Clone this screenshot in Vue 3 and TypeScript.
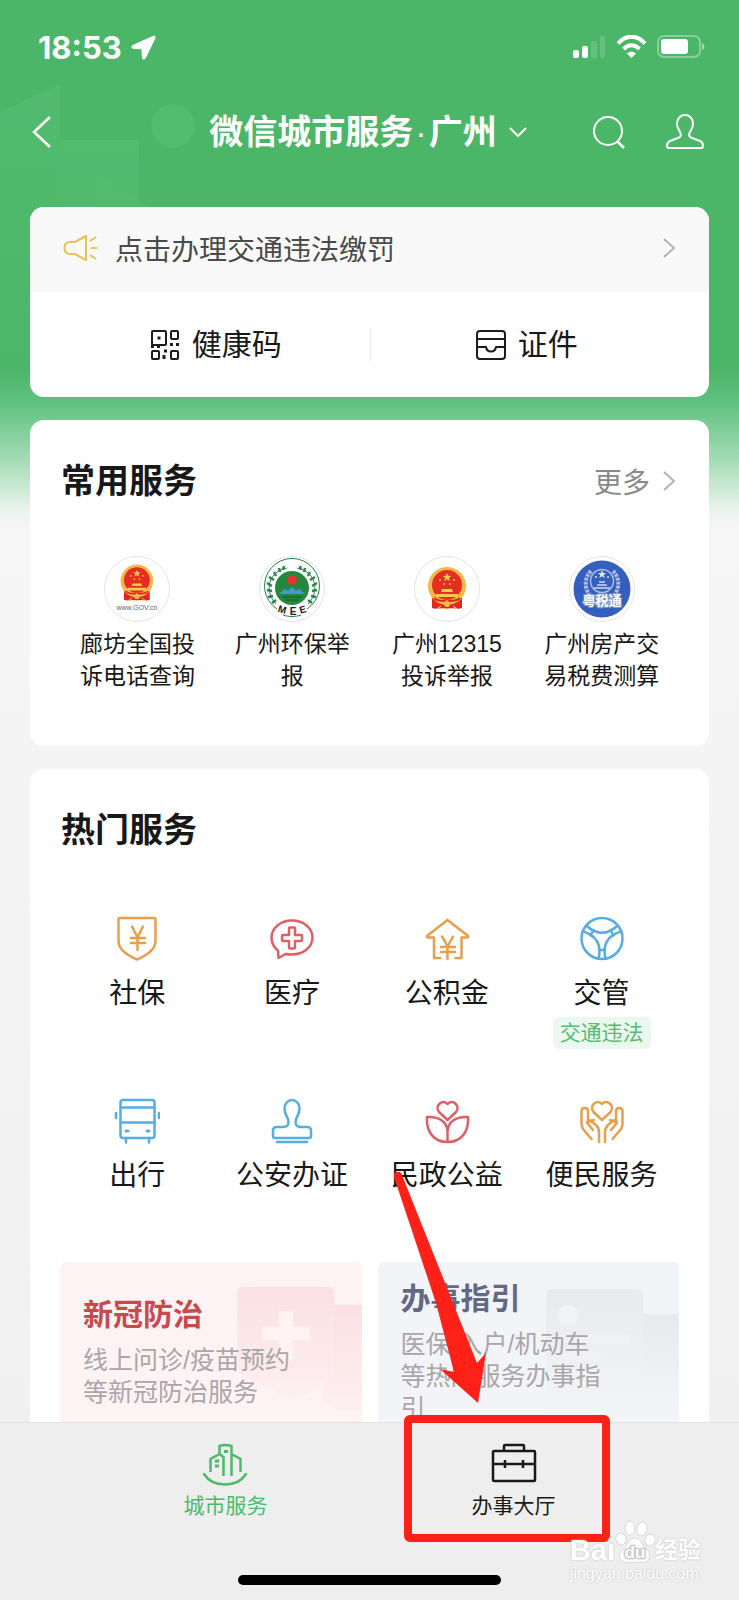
<script setup lang="ts">
interface FrequentService {
  id: string
  lines: string[]
}

interface HotService {
  icon: string
  label: string
  tone: 'orange' | 'red' | 'blue'
  tag?: string
}

interface Promo {
  id: 'health' | 'guide'
  title: string
  text: string
}

const frequent: FrequentService[] = [
  { id: 'gov', lines: ['廊坊全国投', '诉电话查询'] },
  { id: 'mee', lines: ['广州环保举', '报'] },
  { id: 'report', lines: ['广州12315', '投诉举报'] },
  { id: 'tax', lines: ['广州房产交', '易税费测算'] },
]

const hot: HotService[] = [
  { icon: 'shield', label: '社保', tone: 'orange' },
  { icon: 'medical', label: '医疗', tone: 'red' },
  { icon: 'house', label: '公积金', tone: 'orange' },
  { icon: 'wheel', label: '交管', tone: 'blue', tag: '交通违法' },
  { icon: 'bus', label: '出行', tone: 'blue' },
  { icon: 'stamp', label: '公安办证', tone: 'blue' },
  { icon: 'lotus', label: '民政公益', tone: 'red' },
  { icon: 'hands', label: '便民服务', tone: 'orange' },
]

const promos: Promo[] = [
  { id: 'health', title: '新冠防治', text: '线上问诊/疫苗预约等新冠防治服务' },
  { id: 'guide', title: '办事指引', text: '医保/入户/机动车等热门服务办事指引' },
]
</script>

<template>
  <div class="screen">
    <svg class="skyline" viewBox="0 0 739 400" preserveAspectRatio="xMidYMin slice" aria-hidden="true">
      <defs>
        <linearGradient id="tower" x1="0" y1="0" x2="0" y2="1">
          <stop offset="0" stop-color="#6bd08a" />
          <stop offset="1" stop-color="#6bd08a" stop-opacity="0" />
        </linearGradient>
      </defs>
      <circle cx="173" cy="126" r="22" fill="#6bd08a" />
      <path d="M0 112L60 84V400H0Z" fill="url(#tower)" />
      <path d="M60 140H139V400H60Z" fill="url(#tower)" />
      <path d="M97 172L180 230V400H97Z" fill="url(#tower)" />
    </svg>

    <div class="scroll">
      <div class="status">
        <div class="clock">
          <span>18:53</span>
          <svg width="25" height="25" viewBox="0 0 25 25" aria-hidden="true">
            <path d="M22.500 1.200L1.600 10.600c-1.300.7-1 2.600.5 2.700l8.800.5.6 9c.1 1.500 2 1.900 2.700.5L24 3C24.500 1.700 23.700.8 22.500 1.200Z" fill="#fff" stroke="#fff" stroke-linejoin="round" />
          </svg>
        </div>
        <div class="signals">
          <svg width="33" height="24" viewBox="0 0 33 24" fill="#fff" aria-hidden="true">
            <rect x="0" y="15" width="6" height="8" rx="2" />
            <rect x="9" y="11" width="6" height="12" rx="2" />
            <rect x="18" y="6" width="6" height="17" rx="2" opacity=".15" />
            <rect x="27" y="1" width="5" height="22" rx="2" opacity=".15" />
          </svg>
          <svg width="31" height="24" viewBox="0 0 31 24" fill="none" stroke="#fff" stroke-width="4" aria-hidden="true">
            <path d="M2 8.500C10-.5 21-.5 29 8.500" />
            <path d="M7.500 14C12.500 9 18.500 9 23.500 14" />
            <path d="M15.500 23l-4.500-4.500c2.500-2.500 6.500-2.500 9 0Z" fill="#fff" stroke="none" />
          </svg>
          <svg width="48" height="24" viewBox="0 0 48 24" aria-hidden="true">
            <rect x="1" y="1" width="42" height="21" rx="6" fill="none" stroke="#fff" stroke-width="2" opacity=".35" />
            <rect x="4" y="4" width="27" height="15" rx="3" fill="#fff" />
            <path d="M45 8c3 1 3 6 0 7Z" fill="#fff" opacity=".5" />
          </svg>
        </div>
      </div>

      <header class="nav">
        <button class="plain" type="button" aria-label="返回">
          <svg width="20" height="32" viewBox="0 0 20 32" fill="none" stroke="#fff" stroke-width="2.500" aria-hidden="true">
            <path d="M18 1L2 16l16 15" />
          </svg>
        </button>
        <button class="plain city" type="button">
          <h1>微信城市服务<span class="dot">·</span>广州</h1>
          <svg width="18" height="12" viewBox="0 0 18 12" fill="none" stroke="#fff" stroke-width="2" aria-hidden="true">
            <path d="M1 2l8 8 8-8" />
          </svg>
        </button>
        <div class="tools">
          <button class="plain" type="button" aria-label="搜索">
            <svg width="32" height="34" viewBox="0 0 32 34" fill="none" stroke="#fff" stroke-width="2" aria-hidden="true">
              <circle cx="15" cy="16" r="14" />
              <path d="M24 26l7 7" stroke-width="2.500" />
            </svg>
          </button>
          <button class="plain" type="button" aria-label="我的">
            <svg width="38" height="36" viewBox="0 0 38 36" fill="none" stroke="#fff" stroke-width="2" stroke-linejoin="round" aria-hidden="true">
              <path d="M19 1c5 0 8 4 8 9 0 4-2 6-3.500 9-1 3 0 4 2.500 5l8 3c2.500 1 3 2.500 3 5 0 1-.5 2-2 2H3c-1.500 0-2-1-2-2 0-2.500.5-4 3-5l8-3c2.500-1 3.500-2 2.500-5C13 16 11 14 11 10c0-5 3-9 8-9Z" />
            </svg>
          </button>
        </div>
      </header>

      <main>
        <section class="card top">
          <a class="notice" href="#fine">
            <svg width="35" height="28" viewBox="0 0 35 28" fill="none" stroke="#ebc055" stroke-width="2" stroke-linejoin="round" aria-hidden="true">
              <path d="M23 2v24L12 20H7c-3 0-5.500-2-5.500-6S4 8 7 8h5Z" />
              <path d="M27 7l6-4M28 14h6M27 21l6 4" />
            </svg>
            <span>点击办理交通违法缴罚</span>
            <svg class="arrow" width="14" height="20" viewBox="0 0 14 20" fill="none" stroke="#b2b2b2" stroke-width="2" aria-hidden="true">
              <path d="M2 1l10 9-10 9" />
            </svg>
          </a>
          <div class="quick">
            <a href="#code">
              <svg width="30" height="30" viewBox="0 0 30 30" fill="none" stroke="#1b1b1b" stroke-width="2" aria-hidden="true">
                <rect x="2" y="1" width="14" height="14" rx="1" />
                <rect x="21" y="1" width="7" height="8" rx="1" />
                <rect x="2" y="21" width="7" height="8" rx="1" />
                <rect x="21" y="21" width="7" height="8" rx="1" />
                <path d="M7.500 8h3M20 14.500h3M26 14.500h3M1 16.500h3M7 16.500h3M14 21h3M14 25v4" stroke-width="3" />
              </svg>
              <span>健康码</span>
            </a>
            <a href="#papers">
              <svg width="30" height="30" viewBox="0 0 30 30" fill="none" stroke="#1b1b1b" stroke-width="2" stroke-linejoin="round" aria-hidden="true">
                <rect x="1" y="1" width="28" height="28" rx="3" />
                <path d="M1 9h28M1 17h9c1 6 9 6 10 0h9" />
              </svg>
              <span>证件</span>
            </a>
          </div>
        </section>

        <section class="card usual">
          <div class="head">
            <h2>常用服务</h2>
            <a class="more" href="#more">
              更多
              <svg width="14" height="20" viewBox="0 0 14 20" fill="none" stroke="#b2b2b2" stroke-width="2" aria-hidden="true">
                <path d="M2 1l10 9-10 9" />
              </svg>
            </a>
          </div>
          <div class="columns">
            <a v-for="item in frequent" :key="item.id" class="service" :href="`#${item.id}`">
              <svg class="logo" width="66" height="66" viewBox="0 0 66 66" aria-hidden="true">
                <circle cx="33" cy="33" r="32.500" fill="#fff" stroke="#e4e4e4" />
                <g v-if="item.id === 'gov' || item.id === 'report'" :transform="item.id === 'gov' ? 'translate(4.5 0) scale(.86)' : 'translate(0 1)'">
                  <path d="M18 36h30v15c-5 2-9-1-15 1-6-2-10 1-15-1Z" fill="#dc2a20" />
                  <circle cx="33" cy="29" r="19" fill="#f2b84b" />
                  <circle cx="33" cy="28" r="15" fill="#e52d22" />
                  <path d="M33 16l1.200 2.800 3 .2-2.300 2 .8 2.900-2.700-1.600-2.600 1.600.7-2.900-2.300-2 3-.2Z" fill="#f8ca51" />
                  <g fill="#f8ca51">
                    <circle cx="26" cy="23" r="1" />
                    <circle cx="40" cy="23" r="1" />
                    <circle cx="30" cy="27" r="1" />
                    <circle cx="36" cy="27" r="1" />
                    <path d="M28 32h10l1 3H27ZM22 37h22v3H22Z" />
                  </g>
                  <path d="M20 41c5 5 9 1 13 4 4-3 8 1 13-4" fill="none" stroke="#dc2a20" stroke-width="2" />
                  <circle cx="33" cy="47" r="3" fill="#f2b84b" />
                  <path d="M23 52l4-3M43 52l-4-3M28 52h10" stroke="#fbe3a4" stroke-width="1" />
                </g>
                <text v-if="item.id === 'gov'" x="33" y="54" text-anchor="middle" class="tiny">www.GOV.cn</text>
                <g v-if="item.id === 'mee'">
                  <path d="M18 53A27.500 27.500 0 1 1 48 53M24 59c6 2 12 2 18 0" fill="none" stroke="#1f8149" stroke-width="1" />
                  <circle cx="33" cy="32" r="17" fill="#23893f" />
                  <circle cx="33" cy="24" r="5" fill="#e2362b" />
                  <path d="M20 38l6-5 3 2 4-4 4 4 3-2 6 5Z" fill="#4796dd" />
                  <path d="M23 41h20M26 44h14" stroke="#155b2d" stroke-width="1" />
                  <g fill="none" stroke="#27854a" stroke-width="2.500">
                    <path d="M28 12c-22 5-21 26-11 36M38 12c22 5 21 26 11 36" stroke-width="1" />
                    <path d="M25 10l-1 4M20 12l1 4M15 16l2 4M10 21l5 3M8 27l5 3M8 34l5 1M9 41l5-1M13 47l4-3M41 10l1 4M46 12l-1 4M51 16l-2 4M56 21l-5 3M58 27l-5 3M58 34l-5 1M57 41l-5-1M53 47l-4-3" />
                  </g>
                  <g class="mee" text-anchor="middle">
                    <text x="23" y="57" transform="rotate(16 23 54)">M</text>
                    <text x="34" y="59">E</text>
                    <text x="44" y="57" transform="rotate(-16 44 54)">E</text>
                  </g>
                </g>
                <g v-if="item.id === 'tax'">
                  <circle cx="33" cy="33" r="28.500" fill="#345fbe" />
                  <g fill="none" stroke="#a9bde6">
                    <circle cx="33" cy="25" r="11.500" stroke-width="1.500" />
                    <path d="M22 15c-7 7-7 18 0 26M44 15c7 7 7 18 0 26" stroke-width="4" stroke-dasharray="3 1" />
                    <path d="M19 43l14 8 14-8M24 40l9 5 9-5" stroke-width="2.500" />
                    <path d="M25 32h16M28 29h10M30 26h6" stroke-width="2" />
                  </g>
                  <path d="M33 14l1.200 3h3l-2.400 2 .9 3-2.700-1.800-2.700 1.800.9-3-2.400-2h3Z" fill="#dbe5f9" />
                  <circle cx="27" cy="21" r="1" fill="#dbe5f9" />
                  <circle cx="39" cy="21" r="1" fill="#dbe5f9" />
                  <text x="33" y="49" text-anchor="middle" class="tax">粤税通</text>
                </g>
              </svg>
              <span class="caption">
                <span v-for="line in item.lines" :key="line">{{ line }}</span>
              </span>
            </a>
          </div>
        </section>

        <section class="card popular">
          <div class="head">
            <h2>热门服务</h2>
          </div>
          <div class="columns rows">
            <a v-for="item in hot" :key="item.icon" class="service" :href="`#${item.icon}`">
              <svg class="line-icon" :class="item.tone" width="46" height="46" viewBox="-1 0 46 46" aria-hidden="true">
                <g v-if="item.icon === 'shield'">
                  <path d="M5 2H39a1.500 1.500 0 0 1 1.500 1.500V25c0 9-9 14.500-18.500 18.500C12.500 39.500 3.500 34 3.500 25V3.500A1.500 1.500 0 0 1 5 2Z" />
                  <path d="M17 10.500l5.500 11 5.500-11M22.500 21v13M16 22h14M16 27h14" />
                </g>
                <g v-else-if="item.icon === 'medical'">
                  <path d="M8 34.500C3.500 31 1.500 26.500 1.500 21.500c0-9.500 9-17 20.500-17s20.500 7.500 20.500 17-9 17-20.500 17c-2.500 0-4.500 0-6.500-.5L8.500 42Z" />
                  <path d="M20 11.500h4a1 1 0 0 1 1 1V19h6a1 1 0 0 1 1 1v4a1 1 0 0 1-1 1h-6v6.500a1 1 0 0 1-1 1h-4a1 1 0 0 1-1-1V25h-6a1 1 0 0 1-1-1v-4a1 1 0 0 1 1-1h6v-6.500a1 1 0 0 1 1-1Z" />
                </g>
                <g v-else-if="item.icon === 'house'">
                  <path d="M15 42H9V21.500H3c-1.500 0-1.500-1-.5-2L22.500 4l20 15.500c1 1 1 2-.5 2h-5.500V42h-6" />
                  <path d="M17 20.500l5.500 10 5.500-10M22.500 30v13M16 31h14M16 36h14" />
                </g>
                <g v-else-if="item.icon === 'wheel'">
                  <circle cx="22" cy="22.500" r="20.500" />
                  <g v-for="turn in [0, 120, 240]" :key="turn" :transform="`rotate(${turn} 22 22.5)`">
                    <path d="M6.300 9.500Q22 24 37.700 9.500" />
                    <path d="M19 34h6" />
                  </g>
                </g>
                <g v-else-if="item.icon === 'bus'">
                  <rect x="5.500" y="2" width="34" height="38" rx="2.500" />
                  <path d="M5.500 9.500h34M5.500 24.500h34M1 15v5M44 15v5M11 40v4.500M34 40v4.500" />
                  <path d="M11 33h2M32 33h2" stroke-width="3" />
                </g>
                <g v-else-if="item.icon === 'stamp'">
                  <path d="M18.500 24c0-5-4-6.500-4-13.500a7.500 8.500 0 0 1 15 0c0 7-4 8.500-4 13.500 0 3 2 5 5 5h7c2 0 3.500 1.500 3.500 3.500V38c0 1.500-1 2-2 2H5c-1 0-2-.5-2-2v-5.500C3 30.500 4.500 29 6.500 29h7c3 0 5-2 5-5Z" />
                  <path d="M7 44h30" />
                </g>
                <g v-else-if="item.icon === 'lotus'">
                  <path d="M22.500 22L14 14c-5-6 4-14 8.500-8 4.500-6 13.500 2 8.500 8Z" />
                  <path d="M2 19c12-1 20 5 20.500 14v11C9 44 1 34 2 19ZM43 19c-12-1-20 5-20.500 14v11C36 44 44 34 43 19Z" />
                </g>
                <g v-else>
                  <path d="M22 22L13.500 14c-5-6 4-14 8.500-8 4.500-6 13.500 2 8.500 8Z" />
                  <g v-for="side in [1, -1]" :key="side" :transform="`translate(22 0) scale(${side} 1)`">
                    <path d="M-3 44V34c0-3-1-5-3-7l-5-4c-3-2-5 1-3 3l5 6M-8 22l-6 2V13c0-4-6.500-4-6.500 0v13c0 2 .5 3 1.500 5l8.500 10" />
                  </g>
                </g>
              </svg>
              <span class="name">{{ item.label }}</span>
              <span v-if="item.tag" class="tag">{{ item.tag }}</span>
            </a>
          </div>

          <div class="promos">
            <a v-for="promo in promos" :key="promo.id" class="promo" :class="promo.id" :href="`#${promo.id}`">
              <svg v-if="promo.id === 'health'" class="art" width="126" height="178" viewBox="0 0 126 178" aria-hidden="true">
                <defs>
                  <linearGradient id="rose" x1="0" y1="0" x2="0" y2="1">
                    <stop offset="0" stop-color="#fbe0e2" />
                    <stop offset="1" stop-color="#fdeff0" />
                  </linearGradient>
                </defs>
                <path d="M90 43h36v104H98l-12-10Z" fill="url(#rose)" />
                <path d="M7 25H91q7 0 7 7v81c-10-5-13 17-24 17-12 8-24 8-34 0L7 113q-6-4-6-10V32q0-7 6-7Z" fill="url(#rose)" />
                <path d="M43 49h14v16h17v13H57v19H43V78H26V65h17Z" fill="#fef2f3" />
              </svg>
              <svg v-else class="art" width="134" height="178" viewBox="0 0 134 178" aria-hidden="true">
                <defs>
                  <linearGradient id="slate" x1="0" y1="0" x2="0" y2="1">
                    <stop offset="0" stop-color="#e8eaee" />
                    <stop offset="1" stop-color="#f3f4f7" />
                  </linearGradient>
                </defs>
                <path d="M98 52h36v96H98Z" fill="url(#slate)" />
                <rect x="1" y="27" width="97" height="121" rx="6" fill="url(#slate)" />
                <circle cx="23" cy="53" r="10" fill="#f2f3f6" />
                <path d="M14 77h70M14 96h45" stroke="#f0f1f5" stroke-width="9" />
              </svg>
              <h3>{{ promo.title }}</h3>
              <p>{{ promo.text }}</p>
            </a>
          </div>
        </section>
      </main>
    </div>

    <footer>
      <nav class="tabs">
        <button class="plain tab active" type="button">
          <svg width="46" height="44" viewBox="0 0 46 44" fill="none" stroke="currentColor" stroke-width="3" aria-hidden="true">
            <path d="M8.500 29V16l9-5V3q5-2 12 0v30M17.500 11l4 3v19M29.500 11l9 5v13" stroke-width="2.500" />
            <path d="M2 31c9 14 33 14 42 0" stroke-width="2.500" stroke-linecap="round" />
            <path d="M22 8.500h4M13 18h4M13 23h4" />
          </svg>
          <span>城市服务</span>
        </button>
        <button class="plain tab" type="button">
          <svg width="46" height="44" viewBox="0 0 46 44" fill="none" stroke="currentColor" stroke-width="2.500" stroke-linejoin="round" aria-hidden="true">
            <rect x="2" y="8" width="42" height="30" rx="1" />
            <path d="M13 8V3q0-1 1-1h18q1 0 1 1v5M2 21h42M14 17v8M32 17v8" />
          </svg>
          <span>办事大厅</span>
        </button>
      </nav>
      <div class="home-bar"></div>
      <svg class="pointer" width="224" height="376" viewBox="0 0 224 376" aria-hidden="true">
        <path d="M4 7A4 4 0 0 1 12 5L87 193l9-10-8 50-38-34 14 3L46 133Z" fill="#fd2117" />
        <rect x="18" y="249" width="198" height="119" rx="2" fill="none" stroke="#fd2117" stroke-width="8" stroke-linejoin="round" />
      </svg>
      <div class="watermark">
        <div class="brand">
          <span>Bai</span>
          <svg width="40" height="44" viewBox="0 0 40 44" aria-hidden="true">
            <g fill="#fff" stroke="#d9d9d9" stroke-width="1">
              <ellipse cx="6" cy="19" rx="5" ry="6" transform="rotate(-20 6 19)" />
              <ellipse cx="15" cy="8" rx="5" ry="7" />
              <ellipse cx="27" cy="9" rx="5" ry="7" transform="rotate(12 27 9)" />
              <ellipse cx="35" cy="20" rx="5" ry="6" transform="rotate(20 35 20)" />
              <path d="M20 18c5 0 6 4 9 8 4 4 7 8 5 13-2 4-7 4-14 3-7 1-13 1-15-3-2-5 2-9 6-13 3-4 4-8 9-8Z" />
            </g>
            <text x="20" y="38" text-anchor="middle" class="du">du</text>
          </svg>
          <span class="exp">经验</span>
        </div>
        <div class="site">jingyan.baidu.com</div>
      </div>
    </footer>
  </div>
</template>

<style>
body {
  margin: 0;
}
</style>

<style scoped>
.screen {
  position: relative;
  display: flex;
  flex-direction: column;
  height: 100vh;
  overflow: hidden;
  color: #181818;
  font-family: "Liberation Sans", "Noto Sans CJK SC", sans-serif;
  background: linear-gradient(to bottom, #4bb668 0, #4bb668 370px, #62c283 405px, #a5dcb5 460px, #eaf3ec 510px, #f6f6f6 530px, #efefef 100%);
}

.skyline {
  position: absolute;
  top: 0;
  left: 0;
  width: 100%;
  height: 400px;
  opacity: 0.2;
}

.scroll {
  position: relative;
  flex: 1;
  min-height: 0;
  overflow-y: auto;
  scrollbar-width: none;
}

.plain {
  display: flex;
  align-items: center;
  padding: 0;
  border: 0;
  background: none;
  color: inherit;
  font: inherit;
}

a {
  color: inherit;
  text-decoration: none;
}

h1,
h2,
h3,
p {
  margin: 0;
}

.status {
  display: flex;
  align-items: center;
  justify-content: space-between;
  height: 94px;
  padding: 0 34px 0 38px;
}

.clock {
  display: flex;
  align-items: center;
  gap: 9px;
  color: #fff;
  font: 700 31px/1 Inter, "Liberation Sans", sans-serif;
}

.signals {
  display: flex;
  gap: 10px;
}

.nav {
  display: grid;
  grid-template-columns: 1fr auto 1fr;
  align-items: center;
  height: 76px;
  padding: 0 35px 0 32px;
  color: #fff;
}

.city {
  gap: 12px;
}

.city h1 {
  font-size: 34px;
  line-height: 48px;
  font-weight: 600;
}

.dot {
  padding: 0 2px;
  font-weight: 400;
}

.tools {
  display: flex;
  align-items: center;
  justify-content: flex-end;
  gap: 41px;
}

main {
  display: grid;
  gap: 23px;
  padding: 37px 30px 24px;
}

.card {
  overflow: hidden;
  border-radius: 14px;
  background: #fff;
}

.notice {
  display: flex;
  align-items: center;
  gap: 17px;
  height: 82px;
  padding: 0 33px 3px;
  background: #f9f9f9;
  color: #4a4a4a;
  font-size: 28px;
}

.arrow {
  margin-left: auto;
}

.quick {
  display: grid;
  grid-template-columns: 1fr 1fr;
  padding: 36px 0;
  font-size: 30px;
}

.quick a {
  display: flex;
  align-items: center;
  justify-content: center;
  gap: 12px;
  height: 33px;
  line-height: 33px;
}

.quick a + a {
  border-left: 1px solid #ececec;
  padding-right: 26px;
}

.quick a:first-child {
  padding-left: 32px;
}

.head {
  display: flex;
  align-items: center;
  justify-content: space-between;
  height: 50px;
  padding: 0 3px 0 1px;
}

.head h2 {
  font-size: 34px;
  line-height: 50px;
  font-weight: 600;
}

.more {
  display: flex;
  align-items: center;
  gap: 12px;
  color: #888;
  font-size: 28px;
}

.usual {
  padding: 36px 30px 54px;
}

.popular {
  padding: 36px 30px 30px;
}

.columns {
  display: grid;
  grid-template-columns: repeat(4, 1fr);
  padding-top: 50px;
}

.rows {
  grid-auto-rows: 182px;
  padding-top: 61px;
}

.service {
  display: flex;
  flex-direction: column;
  align-items: center;
}

.caption {
  display: grid;
  margin-top: 6px;
  font-size: 23px;
  line-height: 32px;
  text-align: center;
}

.tiny {
  fill: #666;
  font-size: 7px;
}

.mee {
  fill: #222;
  font-size: 10px;
  font-weight: 700;
}

.tax {
  fill: #fff;
  stroke: #7f96c6;
  stroke-width: 2px;
  paint-order: stroke;
  font-size: 13px;
  font-weight: 700;
}

.line-icon {
  fill: none;
  stroke: currentColor;
  stroke-width: 2.5;
  stroke-linejoin: round;
  stroke-linecap: round;
}

.orange {
  color: #e79f4c;
}

.red {
  color: #dc6167;
}

.blue {
  color: #55ade3;
}

.name {
  margin-top: 12px;
  font-size: 28px;
  line-height: 40px;
}

.tag {
  margin-top: 3px;
  padding: 0 7px;
  border-radius: 6px;
  background: #ebf8ef;
  color: #54bd70;
  font-size: 21px;
  line-height: 32px;
}

.promos {
  display: grid;
  grid-template-columns: 1fr 1fr;
  gap: 16px;
  margin-top: -18px;
}

.promo {
  position: relative;
  display: flex;
  flex-direction: column;
  justify-content: center;
  height: 178px;
  padding: 0 66px 0 23px;
  overflow: hidden;
  border-radius: 6px;
}

.health {
  background: #fef3f4;
}

.guide {
  background: #f3f4f8;
}

.art {
  position: absolute;
  top: 0;
  right: 0;
}

.promo h3 {
  position: relative;
  margin-bottom: 8px;
  font-size: 30px;
  line-height: 42px;
  font-weight: 600;
}

.promo p {
  position: relative;
  color: #aaa6a8;
  font-size: 25px;
  line-height: 32px;
}

.health h3 {
  color: #c74a4c;
}

.guide h3 {
  color: #626984;
}

footer {
  position: relative;
  box-sizing: border-box;
  height: 178px;
  padding-top: 20px;
  border-top: 1px solid #e2e2e2;
  background: #eee;
}

.tabs {
  display: grid;
  grid-template-columns: 1fr 1fr;
  padding: 0 11%;
}

.tab {
  flex-direction: column;
  gap: 4px;
  font-size: 21px;
  line-height: 30px;
}

.active {
  color: #4dba69;
}

.home-bar {
  width: 263px;
  height: 10px;
  margin: 54px auto 0;
  border-radius: 5px;
  background: #000;
}

.pointer {
  position: absolute;
  right: 125px;
  bottom: 54px;
}

.watermark {
  position: absolute;
  right: 38px;
  bottom: 16px;
  color: #fff;
  text-shadow: 0 0 2px #bbb;
}

.brand {
  display: flex;
  align-items: flex-end;
  height: 44px;
  font-size: 29px;
  line-height: 28px;
  font-weight: 700;
}

.exp {
  font-size: 23px;
}

.du {
  fill: #fff;
  stroke: #ccc;
  stroke-width: 2px;
  paint-order: stroke;
  font-size: 17px;
  font-weight: 700;
}

.site {
  font-size: 16px;
  line-height: 20px;
}
</style>
